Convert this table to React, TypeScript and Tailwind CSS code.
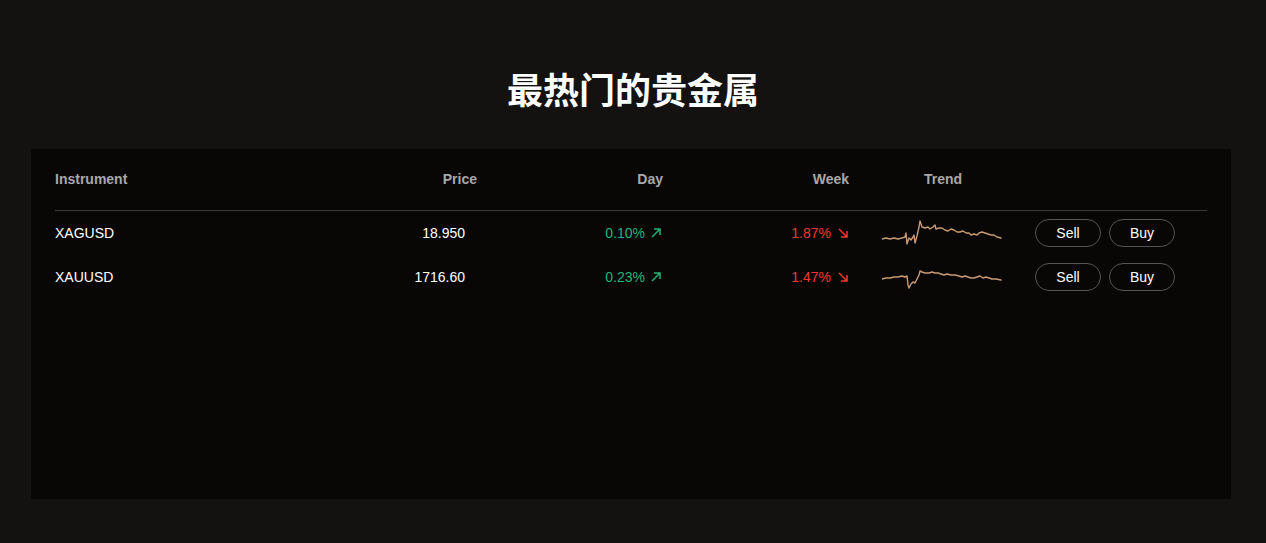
import React from 'react';

interface Row {
  symbol: string;
  price: string;
  day: string;
  week: string;
  trend: string;
}

const rows: Row[] = [
  {
    symbol: 'XAGUSD',
    price: '18.950',
    day: '0.10%',
    week: '1.87%',
    trend:
      '0,20 4,19 8,20 12,19 16,20 20,19 23,18 24,14 25,25 27,19 29,21 31,18 32,16 33,24 35,17 37,8 38,2 40,8 43,9 46,8 48,10 51,8 53,6 54,10 57,9 60,9 63,11 66,12 69,10 72,11 75,13 78,13 81,12 84,14 87,14 89,16 92,15 95,16 97,14 100,13 103,14 106,15 109,16 112,16 115,18 119,19',
  },
  {
    symbol: 'XAUUSD',
    price: '1716.60',
    day: '0.23%',
    week: '1.47%',
    trend:
      '0,16 4,15 8,15 12,14 16,14 20,13 23,14 25,13 26,22 27,25 29,21 31,19 33,20 35,16 37,12 38,8 40,9 43,10 47,10 50,9 53,10 56,10 59,11 62,12 65,11 69,12 73,12 77,13 80,14 83,13 86,14 89,15 92,15 95,14 98,13 101,15 104,14 107,15 110,16 114,16 119,17',
  },
];

const Sparkline: React.FC<{ points: string }> = ({ points }) => (
  <svg width="120" height="28" viewBox="0 0 120 28" className="block">
    <polyline
      points={points}
      fill="none"
      stroke="#c99b73"
      strokeWidth="1.4"
      strokeLinejoin="round"
      strokeLinecap="round"
    />
  </svg>
);

const UpArrow = () => (
  <svg width="10" height="10" viewBox="0 0 10 10" fill="none" stroke="currentColor" strokeWidth="1.5">
    <path d="M1 9 L9 1 M3 1 H9 V7" />
  </svg>
);

const DownArrow = () => (
  <svg width="10" height="10" viewBox="0 0 10 10" fill="none" stroke="currentColor" strokeWidth="1.5">
    <path d="M1 1 L9 9 M3 9 H9 V3" />
  </svg>
);

const Pill: React.FC<{ label: string }> = ({ label }) => (
  <button className="w-[66px] h-[28px] rounded-full border border-[#555452] text-white text-[14px] leading-none">
    {label}
  </button>
);

const App: React.FC = () => {
  return (
    <div
      className="min-h-[543px] bg-[#131211] px-[31px] pt-[66px] pb-[44px]"
      style={{ fontFamily: '"Liberation Sans", Arial, "Noto Sans CJK SC", sans-serif' }}
    >
      <h1
        className="text-center text-white text-[36px] font-bold leading-[44px] mb-[39px]"
        style={{ fontFamily: '"Noto Sans CJK SC", "Liberation Sans", sans-serif' }}
      >
        最热门的贵金属
      </h1>

      <div className="bg-[#080706] w-[1200px] h-[350px] px-[24px]">
        {/* header */}
        <div className="grid grid-cols-[300px_122px_186px_186px_186px_1fr] h-[62px] items-center border-b border-[#3a3937] text-[14px] font-bold text-[#a8a8a8]">
          <div>Instrument</div>
          <div className="text-right">Price</div>
          <div className="text-right">Day</div>
          <div className="text-right">Week</div>
          <div className="text-center pl-[2px]">Trend</div>
          <div />
        </div>

        {rows.map((r) => (
          <div
            key={r.symbol}
            className="grid grid-cols-[300px_122px_186px_186px_186px_1fr] h-[44px] items-center text-[14px] text-white"
          >
            <div>{r.symbol}</div>
            <div className="text-right pr-[12px]">{r.price}</div>
            <div className="flex items-center justify-end gap-[6px] pr-[2px] text-[#1fb57a]">
              <span>{r.day}</span>
              <UpArrow />
            </div>
            <div className="flex items-center justify-end gap-[7px] pr-[1px] text-[#f2382c]">
              <span>{r.week}</span>
              <DownArrow />
            </div>
            <div className="flex justify-center">
              <Sparkline points={r.trend} />
            </div>
            <div className="flex gap-[8px]">
              <Pill label="Sell" />
              <Pill label="Buy" />
            </div>
          </div>
        ))}
      </div>
    </div>
  );
};

export default App;
